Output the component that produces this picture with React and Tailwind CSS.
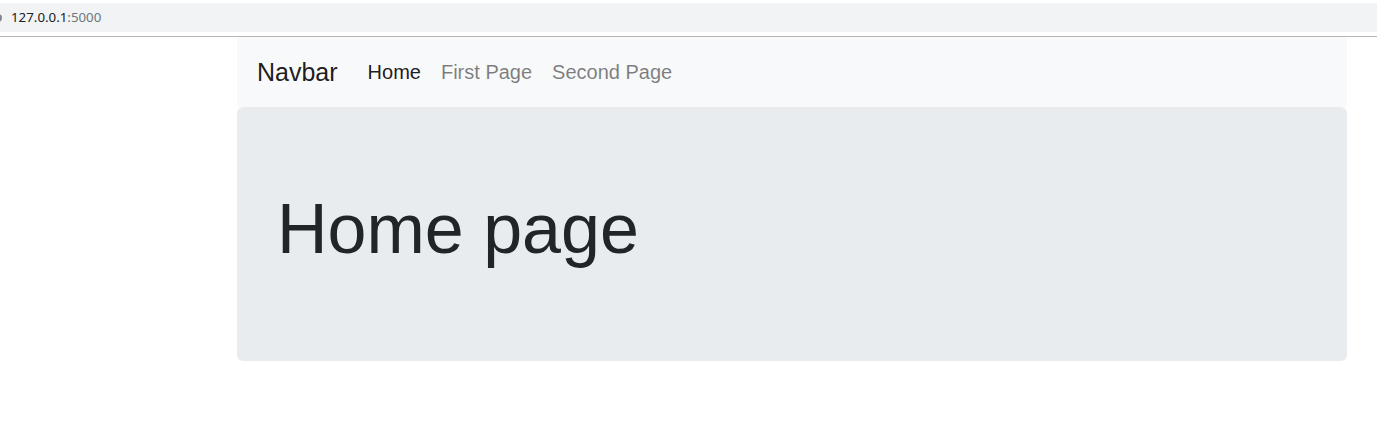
import React from "react";

const AddressBar = () => {
  return (
    <div className="h-[37px] bg-white border-b border-[#b5b5b5] pt-[3px]">
      <div className="h-[29px] bg-[#f1f3f4] flex items-center">
        <span className="w-[8px] h-[8px] -ml-[6px] mr-[9px] rounded-full bg-[#80868b]" />
        <span className="text-[13.3px] font-['Noto_Sans',sans-serif] text-[#202124]">
          127.0.0.1<span className="text-[#70757a]">:5000</span>
        </span>
      </div>
    </div>
  );
};

const Navbar = () => {
  return (
    <nav className="bg-[#f8f9fa] flex items-center px-[20px] py-[10px]">
      <a href="#" className="text-[25px] leading-[37px] text-black/90 mr-[20px]">
        Navbar
      </a>
      <div className="flex">
        <a href="#" className="text-[20px] leading-[30px] px-[10px] py-[10px] text-black/90">
          Home
        </a>
        <a href="#" className="text-[20px] leading-[30px] px-[10px] py-[10px] text-black/50">
          First Page
        </a>
        <a href="#" className="text-[20px] leading-[30px] px-[10px] py-[10px] text-black/50">
          Second Page
        </a>
      </div>
    </nav>
  );
};

export default function App() {
  return (
    <div className="min-h-[422px] bg-white font-['Liberation_Sans',Arial,sans-serif] text-[#212529]">
      <AddressBar />
      <div className="w-[1110px] ml-[237px]">
        <Navbar />
        <div className="bg-[#e9ecef] rounded-[6px] px-[40px] py-[80px]">
          <h1 className="text-[70px] leading-[84px] font-light mb-[10px]">Home page</h1>
        </div>
      </div>
    </div>
  );
}
